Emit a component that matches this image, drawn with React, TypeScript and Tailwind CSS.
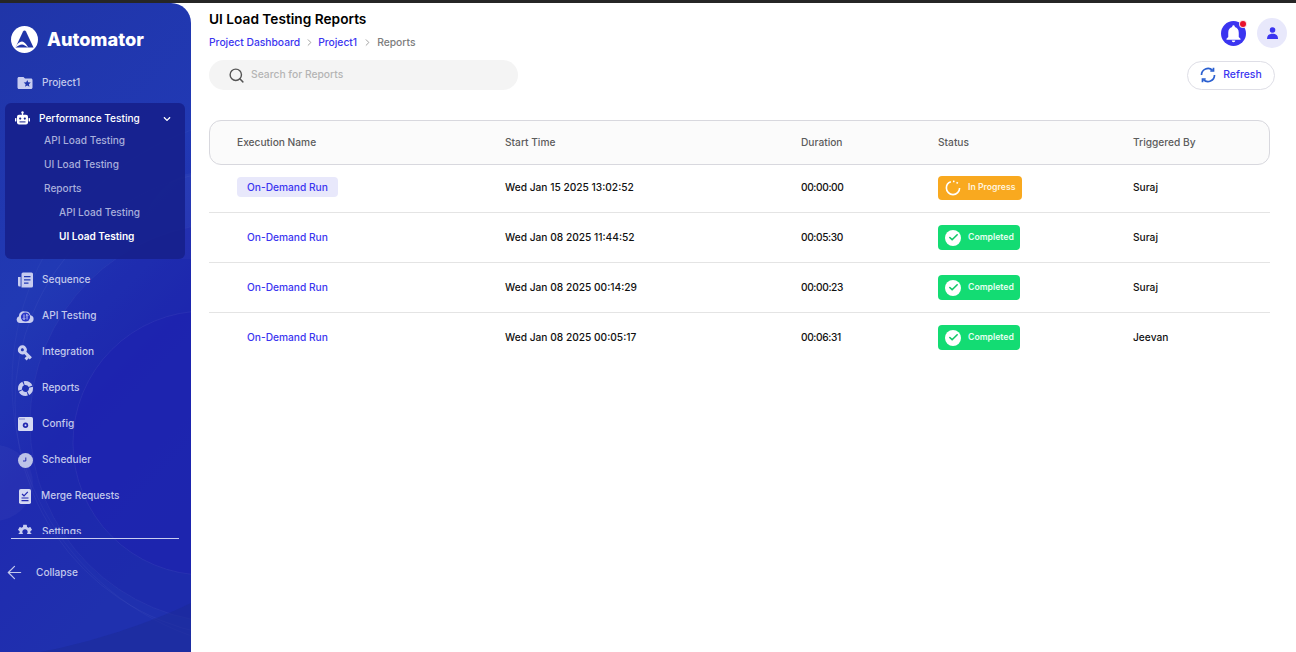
import { MdFolderSpecial, MdNotifications, MdSettings, MdVpnKey } from "react-icons/md";
import { FaChevronDown } from "react-icons/fa";
import { FiChevronRight, FiSearch } from "react-icons/fi";
import { ArrowLeft, Check } from "lucide-react";
import type { ReactNode } from "react";

function SidebarBackdrop() {
  return (
    <svg className="absolute inset-0 h-full w-full" viewBox="0 0 191 649" preserveAspectRatio="none">
      <defs>
        <linearGradient id="sidebar-shade" x1="0" y1="0" x2="0.3" y2="1">
          <stop offset="0" stopColor="#2035a8" />
          <stop offset="0.45" stopColor="#2139b4" />
          <stop offset="0.7" stopColor="#1f2ab0" />
          <stop offset="1" stopColor="#1f30ae" />
        </linearGradient>
      </defs>
      <rect width="191" height="649" fill="url(#sidebar-shade)" />
      <path d="M135 256 C135 215 160 175 191 170 L191 256 Z" fill="#ffffff" opacity="0.03" />
      <circle cx="-5" cy="480" r="38" fill="#ffffff" opacity="0.03" />
      <circle cx="230" cy="420" r="200" fill="#1c22a8" opacity="0.3" />
      <circle cx="230" cy="420" r="200" fill="none" stroke="#ffffff" strokeOpacity="0.04" />
      <circle cx="205" cy="440" r="132" fill="#1e20b0" opacity="0.55" />
      <circle cx="205" cy="440" r="132" fill="none" stroke="#ffffff" strokeOpacity="0.05" />
      <circle cx="250" cy="400" r="235" fill="none" stroke="#ffffff" strokeOpacity="0.04" />
      <circle cx="280" cy="380" r="268" fill="none" stroke="#ffffff" strokeOpacity="0.03" />
      <path d="M40 649 C90 640 150 620 191 600 L191 649 Z" fill="#1b2a96" opacity="0.5" />
    </svg>
  );
}

function Logo() {
  return (
    <svg width="27" height="27" viewBox="0 0 27 27" className="shrink-0">
      <circle cx="13.500" cy="13.500" r="13.500" fill="#ffffff" />
      <path d="M13.500 4.500 Q14.500 4.500 15 5.500 L22.500 21.500 L4.500 21.500 L12 5.500 Q12.500 4.500 13.500 4.500Z" fill="#2035a8" />
      <path d="M4 22 Q7 15.500 11 15.500 Q14 15.500 17.500 22 Q13.500 18.500 11 18.500 Q8 18.500 4 22Z" fill="#ffffff" />
    </svg>
  );
}

function RobotIcon() {
  return (
    <svg width="15" height="15" viewBox="0 0 15 15" fill="#ffffff" className="shrink-0">
      <circle cx="7.500" cy="1.400" r="1.200" />
      <rect x="6.900" y="1.500" width="1.200" height="3" />
      <rect x="2" y="3.800" width="11" height="9.700" rx="2" />
      <rect x="0" y="7" width="1.400" height="3.600" rx="0.600" />
      <rect x="13.600" y="7" width="1.400" height="3.600" rx="0.600" />
      <circle cx="5.200" cy="7.600" r="1.100" fill="#16208c" />
      <circle cx="9.800" cy="7.600" r="1.100" fill="#16208c" />
      <rect x="4.500" y="10.400" width="6" height="1" fill="#16208c" />
    </svg>
  );
}

function SequenceIcon() {
  return (
    <svg width="15" height="16" viewBox="0 0 15 16" fill="#c8cdf0">
      <path d="M0 5h2.600v9.500H1.500A1.500 1.500 0 0 1 0 13Z" />
      <path fillRule="evenodd" d="M5 .5h8.500A1.500 1.500 0 0 1 15 2v12a1.500 1.500 0 0 1-1.500 1.500H3.500V2A1.500 1.500 0 0 1 5 .5ZM6 4v1.300h6.500V4Zm0 3.200v1.300h6.500V7.200Zm0 3.200v1.300h4.500v-1.300Z" />
    </svg>
  );
}

function CloudIcon() {
  return (
    <svg width="18" height="13" viewBox="0 0 18 13">
      <path d="M4 13a3.500 3.500 0 0 1-1-6.800A4.500 4.500 0 0 1 9 1.500a5 5 0 0 1 5.500 3.800A3.900 3.900 0 0 1 14 13Z" fill="#c8cdf0" />
      <circle cx="9.500" cy="7" r="4.600" fill="#2a36c8" />
      <path d="M8 4.500v5M6.800 8.300 8 9.500l1.200-1.200M11 9.500v-5M9.800 5.700 11 4.500l1.200 1.200" stroke="#dfe3f7" strokeWidth="0.800" fill="none" />
    </svg>
  );
}

function DonutIcon() {
  return (
    <svg width="15" height="15" viewBox="0 0 15 15" fill="none">
      <circle cx="7.500" cy="7.500" r="5.500" stroke="#c8cdf0" strokeWidth="4" strokeDasharray="7.600 1" strokeDashoffset="2" />
    </svg>
  );
}

function ConfigIcon() {
  return (
    <svg width="15" height="14" viewBox="0 0 15 14">
      <rect width="15" height="14" rx="1.600" fill="#d5d9f3" />
      <path d="M1.500 2h1M3.500 2h1M5.500 2h1" stroke="#2429b0" strokeWidth="0.900" />
      <circle cx="7.500" cy="8.300" r="2.700" fill="#2429b0" />
      <circle cx="7.500" cy="8.300" r="1" fill="#d5d9f3" />
    </svg>
  );
}

function ClockIcon() {
  return (
    <svg width="15" height="15" viewBox="0 0 15 15">
      <circle cx="7.500" cy="7.500" r="7.500" fill="#bcc3e8" />
      <path d="M7.800 4.500v3.500H5" stroke="#2429b0" strokeWidth="1" fill="none" />
    </svg>
  );
}

function ClipboardIcon() {
  return (
    <svg width="12" height="15" viewBox="0 0 12 15">
      <rect width="12" height="15" rx="1.800" fill="#d5d9f3" />
      <path d="M3 5 5 6.800 8.800 2.800" stroke="#2429b0" strokeWidth="1.200" fill="none" />
      <path d="M2.500 9h7M2.500 11.600h7" stroke="#2429b0" strokeWidth="1.100" />
    </svg>
  );
}

function RefreshIcon() {
  return (
    <svg width="16" height="16" viewBox="0 0 16 16" fill="none" stroke="#2a5fd0" strokeWidth="1.700">
      <path d="M1.500 8A6.500 6.500 0 0 1 12.600 3.400" />
      <path d="M13.500 .8V4H10.300" />
      <path d="M14.500 8A6.500 6.500 0 0 1 3.400 12.600" />
      <path d="M2.500 15.200V12H5.700" />
    </svg>
  );
}

function NavItem({ icon, label, textClass }: { icon: ReactNode; label: string; textClass: string }) {
  return (
    <div className="flex h-9 shrink-0 items-center">
      <div className="flex w-[18px] shrink-0 items-center justify-center text-[#c8cdf0]">{icon}</div>
      <span className={`${textClass} text-[10.1px] font-medium text-[#c3c9ec]`}>{label}</span>
    </div>
  );
}

function StatusBadge({ status }: { status: "progress" | "done" }) {
  if (status === "progress") {
    return (
      <div className="flex h-6 w-[84px] items-center rounded bg-[#f9a91f] pl-[7px] text-[8.7px] font-semibold text-[#fff4df]">
        <svg width="16" height="16" viewBox="0 0 15 15" fill="none" className="mr-[7px]">
          <circle cx="7.500" cy="7.500" r="6.200" stroke="#fff" strokeWidth="1.500" strokeDasharray="27 2 1.500 2 1.500 5" />
        </svg>
        In Progress
      </div>
    );
  }
  return (
    <div className="flex h-[25px] w-[82px] items-center rounded bg-[#13dc73] pl-[7px] text-[8.7px] font-semibold text-[#e6fff1]">
      <span className="mr-[7px] flex h-[16px] w-[16px] items-center justify-center rounded-full bg-white text-[#13c868]">
        <Check size={11} strokeWidth={3.500} />
      </span>
      Completed
    </div>
  );
}

const rows = [
  { start: "Wed Jan 15 2025 13:02:52", duration: "00:00:00", status: "progress" as const, by: "Suraj", active: true },
  { start: "Wed Jan 08 2025 11:44:52", duration: "00:05:30", status: "done" as const, by: "Suraj", active: false },
  { start: "Wed Jan 08 2025 00:14:29", duration: "00:00:23", status: "done" as const, by: "Suraj", active: false },
  { start: "Wed Jan 08 2025 00:05:17", duration: "00:06:31", status: "done" as const, by: "Jeevan", active: false },
];

const gridCols = "grid grid-cols-[268px_296px_137px_195px_1fr] items-center";

export default function App() {
  return (
    <div className="flex h-[652px] w-[1296px] flex-col overflow-hidden bg-white font-['Inter',sans-serif]">
      <div className="h-[3px] shrink-0 bg-[#262626]" />
      <div className="flex min-h-0 flex-1">
        <aside className="relative flex w-[191px] shrink-0 flex-col overflow-hidden rounded-tr-[20px]">
          <SidebarBackdrop />
          <div className="relative flex min-h-0 flex-1 flex-col">
            <div className="flex h-[50px] shrink-0 items-end gap-[9px] pl-[11px]">
              <Logo />
              <span className="text-[18.2px] leading-[28px] font-extrabold text-white">Automator</span>
            </div>
            <div className="flex h-[481px] shrink-0 flex-col overflow-hidden">
              <div className="mt-[12px] pl-4">
                <NavItem icon={<MdFolderSpecial size={18} />} label="Project1" textClass="ml-2" />
              </div>
              <div className="mt-[2px] mr-[6px] ml-[5px] flex h-[156px] shrink-0 flex-col rounded-md bg-[#16208c]/90 pt-[5px]">
                <div className="flex h-[21px] shrink-0 items-center pr-[14px] pl-[10px]">
                  <RobotIcon />
                  <span className="ml-[9px] flex-1 text-[10.1px] font-medium text-white">Performance Testing</span>
                  <FaChevronDown size={8} className="text-white" />
                </div>
                <div className="flex h-6 shrink-0 items-center pl-[39px] text-[10.1px] font-medium text-[#a9afdc]">API Load Testing</div>
                <div className="flex h-6 shrink-0 items-center pl-[39px] text-[10.1px] font-medium text-[#a9afdc]">UI Load Testing</div>
                <div className="flex h-6 shrink-0 items-center pl-[39px] text-[10.1px] font-medium text-[#a9afdc]">Reports</div>
                <div className="flex h-6 shrink-0 items-center pl-[54px] text-[10.1px] font-medium text-[#a9afdc]">API Load Testing</div>
                <div className="flex h-6 shrink-0 items-center pl-[54px] text-[10.1px] font-semibold text-white">UI Load Testing</div>
              </div>
              <div className="mt-[3px] flex flex-col pl-4">
                <NavItem icon={<SequenceIcon />} label="Sequence" textClass="ml-2" />
                <NavItem icon={<CloudIcon />} label="API Testing" textClass="ml-2" />
                <NavItem icon={<MdVpnKey size={19} className="rotate-45" />} label="Integration" textClass="ml-2" />
                <NavItem icon={<DonutIcon />} label="Reports" textClass="ml-2" />
                <NavItem icon={<ConfigIcon />} label="Config" textClass="ml-2" />
                <NavItem icon={<ClockIcon />} label="Scheduler" textClass="ml-2" />
                <NavItem icon={<ClipboardIcon />} label="Merge Requests" textClass="ml-[7px]" />
                <NavItem icon={<MdSettings size={18} />} label="Settings" textClass="ml-2" />
              </div>
            </div>
            <div className="mx-[11px] mt-1 mr-[12px] h-px shrink-0 bg-[#c9cdf0]" />
            <div className="mt-[23px] flex items-center pl-[4px] text-[10.1px] font-medium text-[#c3c9ec]">
              <ArrowLeft size={21} strokeWidth={1.400} />
              <span className="ml-[11px]">Collapse</span>
            </div>
          </div>
        </aside>

        <main className="flex min-w-0 flex-1 flex-col pr-[9px] pl-[18px]">
          <div className="flex items-start justify-between">
            <div>
              <h1 className="mt-[8px] text-[13.7px] leading-4 font-semibold text-black">UI Load Testing Reports</h1>
              <div className="mt-[7px] flex items-center text-[10.3px] leading-4 font-medium text-[#3b35f0]">
                <span>Project Dashboard</span>
                <FiChevronRight size={11} className="mx-[3.5px] text-[#9a9a9a]" />
                <span>Project1</span>
                <FiChevronRight size={11} className="mx-[4.5px] text-[#9a9a9a]" />
                <span className="text-[#7d7d7d]">Reports</span>
              </div>
            </div>
            <div className="mt-[15px] flex items-center gap-[11px]">
              <div className="relative flex h-[25px] w-[25px] items-center justify-center rounded-full bg-[#3b35f0] text-white">
                <MdNotifications size={21} />
                <span className="absolute top-0 right-0 h-[6px] w-[6px] rounded-full bg-[#e8112d] ring-1 ring-[#fbdde0]" />
              </div>
              <div className="flex h-[30px] w-[30px] items-center justify-center rounded-full bg-[#e8e8fb]">
                <svg width="11" height="12" viewBox="0 0 11 12" fill="#3b35f0">
                  <circle cx="5.500" cy="3" r="2.800" />
                  <path d="M0 12c0-3.600 2-5.200 5.500-5.200S11 8.400 11 12Z" />
                </svg>
              </div>
            </div>
          </div>

          <div className="mt-[10px] flex items-center justify-between pr-[12px]">
            <div className="flex h-[30px] w-[309px] items-center rounded-full bg-[#f4f4f4] pl-[19px]">
              <FiSearch size={17} className="text-[#555555]" />
              <span className="ml-[6px] text-[10.3px] font-medium text-[#b4b4b4]">Search for Reports</span>
            </div>
            <div className="flex h-[29px] w-[88px] items-center justify-center gap-[7px] rounded-full border border-[#dedee6] text-[10.4px] font-medium text-[#3b35f0]">
              <RefreshIcon />
              Refresh
            </div>
          </div>

          <div className="mt-[30px] mr-[17px] flex flex-col">
            <div className={`${gridCols} h-[45px] rounded-xl border border-[#d8d8de] bg-[#fbfbfb] pl-[27px] text-[10.2px] font-medium text-[#5c5c5c]`}>
              <span>Execution Name</span>
              <span>Start Time</span>
              <span>Duration</span>
              <span>Status</span>
              <span>Triggered By</span>
            </div>
            {rows.map((row, i) => (
              <div
                key={row.start}
                className={`${gridCols} ${i === 0 ? "h-[48px] pb-[2px]" : i === rows.length - 1 ? "h-[49px]" : "h-[50px]"} ${i < rows.length - 1 ? "border-b border-[#e4e4e4]" : ""} pl-7 text-[10.2px] font-medium text-[#111111]`}
              >
                <div className="-mt-px">
                  <span className={`inline-block rounded px-[10px] py-[3px] leading-[14px] font-medium text-[#3b35f0] ${row.active ? "bg-[#e8e8fb]" : ""}`}>
                    On-Demand Run
                  </span>
                </div>
                <span>{row.start}</span>
                <span className="tracking-[-0.4px]">{row.duration}</span>
                <StatusBadge status={row.status} />
                <span>{row.by}</span>
              </div>
            ))}
          </div>
        </main>
      </div>
    </div>
  );
}
